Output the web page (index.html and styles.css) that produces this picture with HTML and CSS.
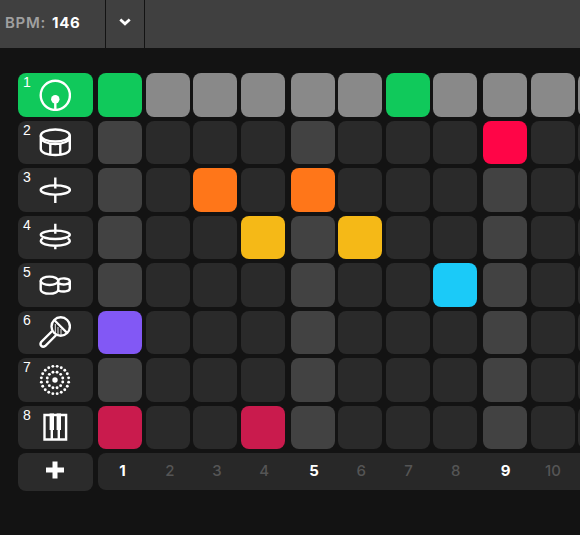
FILE: index.html
```html
<!DOCTYPE html>
<html lang="en">
<head>
<meta charset="utf-8">
<title>Drum sequencer</title>
<link rel="stylesheet" href="styles.css">
</head>
<body>
<header class="toolbar">
  <div class="bpm"><span class="bpm-label">BPM:</span><span class="bpm-value">146</span></div>
  <button class="dropdown" aria-label="Tempo options"><svg width="12" height="8" viewBox="0 0 12 8"><path d="M1.300 1.500 6 5.800l4.700-4.300"/></svg></button>
</header>
<main class="sequencer" id="sequencer">
  <div class="row">
    <div class="track active"><span class="number">1</span>
      <svg class="icon" viewBox="0 0 32 32"><circle cx="16.300" cy="16.300" r="14.600"/><circle class="solid" cx="16.300" cy="20.300" r="4.200"/><path d="M16.300 20v11"/></svg></div>
    <div class="cells" data-hits="1 7" data-color="green"></div>
  </div>
  <div class="row">
    <div class="track"><span class="number">2</span>
      <svg class="icon" viewBox="0 0 32 32"><ellipse cx="16.300" cy="9.500" rx="14.500" ry="6"/><path d="M1.800 9.500v13.500c0 3.500 6 6 14.500 6s14.500-2.500 14.500-6V9.500M1.800 11c0 4 6 7 14.500 7s14.500-3 14.500-7M11.300 18v11M21.300 18v11"/></svg></div>
    <div class="cells" data-hits="9" data-color="red"></div>
  </div>
  <div class="row">
    <div class="track"><span class="number">3</span>
      <svg class="icon" viewBox="0 0 32 32"><ellipse cx="16.300" cy="16" rx="14.600" ry="4.600"/><path d="M16.300 3.500v11M16.300 20.500v8.500"/></svg></div>
    <div class="cells" data-hits="3 5" data-color="orange"></div>
  </div>
  <div class="row">
    <div class="track"><span class="number">4</span>
      <svg class="icon" viewBox="0 0 32 32"><ellipse cx="16.300" cy="13.800" rx="14.500" ry="4.200"/><path d="M16.300 2.800v10M4 17.200c-1.500.8-2.200 1.700-2.200 2.800 0 2.600 6.500 4.800 14.500 4.800s14.500-2.200 14.500-4.800c0-1.100-.7-2-2.200-2.800M16.300 25v3.300"/></svg></div>
    <div class="cells" data-hits="4 6" data-color="yellow"></div>
  </div>
  <div class="row">
    <div class="track"><span class="number">5</span>
      <svg class="icon" viewBox="0 0 32 32"><ellipse cx="10.500" cy="11.800" rx="8.800" ry="4.200"/><path d="M1.700 11.800v8.500c0 5.800 17.600 5.800 17.600 0v-8.500M19.300 11c2-2.300 11.500-2.300 11.500 1.300s-8 4-11.500 1.700M30.800 12v7.500c0 3-7.500 4-11.500 2"/></svg></div>
    <div class="cells" data-hits="8" data-color="blue"></div>
  </div>
  <div class="row">
    <div class="track"><span class="number">6</span>
      <svg class="icon" viewBox="0 0 32 32"><circle cx="21.700" cy="10.500" r="9.200"/><path d="m15.200 4 13 13M13.200 15l-11 11c-2 3 1 6 4 4l11-11"/><path class="fine" d="M16.300 8v9M19 11v8M22 13v6"/></svg></div>
    <div class="cells" data-hits="1" data-color="purple"></div>
  </div>
  <div class="row">
    <div class="track"><span class="number">7</span>
      <svg class="icon" id="clap" viewBox="0 0 32 32"><circle class="solid" cx="16" cy="16" r="2.700"/></svg></div>
    <div class="cells" data-hits="" data-color="none"></div>
  </div>
  <div class="row">
    <div class="track"><span class="number">8</span>
      <svg class="icon" viewBox="0 0 32 32"><path d="M5.500 4h21.600v24.500H5.500zM12.800 18v10M19.800 18v10"/><path class="solid" d="M10.600 2.500h4.400V19h-4.400zM17.600 2.500h4.400V19h-4.400z"/></svg></div>
    <div class="cells" data-hits="1 4" data-color="crimson"></div>
  </div>
  <div class="row footer">
    <button class="add" aria-label="Add track"><svg width="18" height="18" viewBox="0 0 18 18"><path d="M9 .5v17M0 9h18"/></svg></button>
    <div class="steps" id="steps"></div>
  </div>
</main>
<script src="script.js"></script>
</body>
</html>
```
FILE: styles.css
```css
* { box-sizing: border-box; }
body { margin: 0; height: 535px; overflow: hidden; background: #131313; color: #fff; font-family: Inter, "Liberation Sans", sans-serif; }
button { border: 0; padding: 0; color: inherit; }
svg { display: block; fill: none; stroke: #fff; }
.toolbar { display: flex; height: 48px; background: #404040; }
.bpm { display: flex; align-items: center; gap: 6px; width: 106px; padding: 0 0 3px 5px; border-right: 1px solid #131313; font-size: 15px; font-weight: 600; }
.bpm-label { color: #a0a0a0; letter-spacing: .7px; }
.bpm-value { font-weight: 700; letter-spacing: .7px; }
.dropdown { display: flex; align-items: center; justify-content: center; width: 39px; padding-bottom: 4px; background: #404040; border-right: 1px solid #131313; }
.dropdown svg { stroke-width: 2.8; }
.sequencer { display: flex; flex-direction: column; gap: 4px; width: 100%; overflow: hidden; padding: 25px 0 0 18px; }
.row { display: flex; gap: 5px; height: 43.5px; }
.track { position: relative; display: flex; flex: 0 0 75px; align-items: center; justify-content: center; padding-right: 1px; border-radius: 8px; background: #2b2b2b; }
.track.active { background: #10c95b; }
.number { position: absolute; left: 5px; top: 1px; font: 14px/16px "Liberation Sans", sans-serif; }
.icon { width: 32px; height: 32px; stroke-width: 2.4; }
.icon .solid { fill: #fff; stroke: none; }
.icon .fine { stroke-width: .9; }
.cells { display: flex; gap: 3.5px; }
.cell { flex: 0 0 44px; border-radius: 8px; background: #2a2a2a; }
.cell.beat { background: #424242; }
.cell.beat:not(:first-child) { margin-left: 2.6px; }
.row:first-child .cell { background: #898989; }
.row .cell.green, .row:first-child .cell.green { background: #10c95b; }
.cell.red { background: #ff0547; }
.cell.orange { background: #ff7619; }
.cell.yellow { background: #f5b917; }
.cell.blue { background: #1bcaf8; }
.cell.purple { background: #8258f5; }
.cell.crimson { background: #c91b4d; }
.footer { height: 38px; }
.add { display: flex; flex: 0 0 75px; align-items: center; justify-content: center; padding: 0 2px 4px 0; border-radius: 8px; background: #2b2b2b; }
.add svg { stroke-width: 5; }
.steps { display: flex; flex: 0 0 570px; height: 37px; padding-left: 1px; border-radius: 8px; background: #282828; }
.step { flex: 0 0 47.2px; color: #555; font-size: 15px; font-weight: 500; line-height: 35px; text-align: center; }
.step.beat { color: #fff; font-weight: 700; }
.step.beat:not(:first-child) { margin-left: 2.8px; }
```
FILE: script.js
```js
const STEPS = 11;
for (const row of document.querySelectorAll('.cells')) {
  const hits = row.dataset.hits.split(' ').filter(Boolean).map(Number);
  for (let i = 1; i <= STEPS; i++) {
    const cell = document.createElement('div');
    cell.className = 'cell' + (i % 4 === 1 ? ' beat' : '') + (hits.includes(i) ? ' ' + row.dataset.color : '');
    row.append(cell);
  }
}
const steps = document.getElementById('steps');
for (let i = 1; i < STEPS; i++) {
  const step = document.createElement('span');
  step.className = 'step' + (i % 4 === 1 ? ' beat' : '');
  step.textContent = i;
  steps.append(step);
}
const clap = document.getElementById('clap');
for (const [radius, count] of [[8, 12], [13.8, 20]]) {
  for (let i = 0; i < count; i++) {
    const a = (i + .5) / count * Math.PI * 2;
    const dot = document.createElementNS('http://www.w3.org/2000/svg', 'circle');
    dot.setAttribute('class', 'solid');
    dot.setAttribute('cx', 16 + radius * Math.cos(a));
    dot.setAttribute('cy', 16 + radius * Math.sin(a));
    dot.setAttribute('r', 1.45);
    clap.append(dot);
  }
}
```
